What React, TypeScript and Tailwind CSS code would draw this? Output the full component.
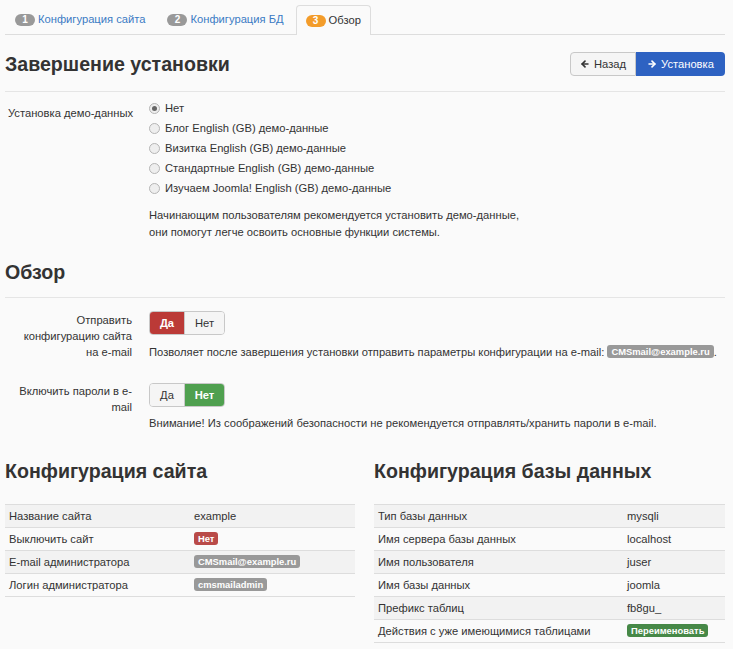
import { ArrowLeft, ArrowRight } from "lucide-react"

const demoOptions = [
  "Нет",
  "Блог English (GB) демо-данные",
  "Визитка English (GB) демо-данные",
  "Стандартные English (GB) демо-данные",
  "Изучаем Joomla! English (GB) демо-данные",
]

type Row = { label: string; value: React.ReactNode }

function Badge({ color, children }: { color: string; children: React.ReactNode }) {
  return (
    <span
      className={`inline-block rounded-[3px] px-[4px] text-[9.4px] leading-[13px] font-bold text-white align-[1px] ${color}`}
    >
      {children}
    </span>
  )
}

function TabBadge({ n, active }: { n: number; active?: boolean }) {
  return (
    <span
      className={`mr-[3px] inline-flex h-[12px] w-[20px] items-center justify-center rounded-full text-[10px] font-bold text-white ${
        active ? "bg-[#f39c2a]" : "bg-[#999999]"
      }`}
    >
      {n}
    </span>
  )
}

function ConfigTable({ rows, col }: { rows: Row[]; col: string }) {
  return (
    <div className="border-b border-[#dddddd]">
      {rows.map((row, i) => (
        <div
          key={i}
          className={`flex h-[23px] items-center border-t border-[#dddddd] ${i % 2 === 0 ? "bg-[#f2f2f2]" : ""}`}
        >
          <div className={`shrink-0 px-[4px] ${col}`}>{row.label}</div>
          <div className="px-[4px]">{row.value}</div>
        </div>
      ))}
    </div>
  )
}

function Toggle({ yes }: { yes: boolean }) {
  return (
    <div className="flex h-[24px] w-fit overflow-hidden rounded-[4px] border border-[#c8c8c8]">
      <div
        className={`flex w-[34px] items-center justify-center ${
          yes ? "bg-[#bb3a37] font-bold text-white" : "bg-[#f5f5f5] text-[#333]"
        }`}
      >
        Да
      </div>
      <div
        className={`flex w-[40px] items-center justify-center border-l border-[#c8c8c8] ${
          !yes ? "bg-[#4fa04f] font-bold text-white" : "bg-[#f5f5f5] text-[#333]"
        }`}
      >
        Нет
      </div>
    </div>
  )
}

export default function App() {
  const siteRows: Row[] = [
    { label: "Название сайта", value: "example" },
    { label: "Выключить сайт", value: <Badge color="bg-[#b94a48]">Нет</Badge> },
    { label: "E-mail администратора", value: <Badge color="bg-[#999999]">CMSmail@example.ru</Badge> },
    { label: "Логин администратора", value: <Badge color="bg-[#999999]">cmsmailadmin</Badge> },
  ]

  const dbRows: Row[] = [
    { label: "Тип базы данных", value: "mysqli" },
    { label: "Имя сервера базы данных", value: "localhost" },
    { label: "Имя пользователя", value: "juser" },
    { label: "Имя базы данных", value: "joomla" },
    { label: "Префикс таблиц", value: "fb8gu_" },
    {
      label: "Действия с уже имеющимися таблицами",
      value: <Badge color="bg-[#468847]">Переименовать</Badge>,
    },
  ]

  return (
    <div className="min-h-screen bg-[#fafafa] pl-[5px] pr-[8px] pt-[5px] font-['Liberation_Sans',Arial,sans-serif] text-[11.2px] text-[#333]">
      {/* tabs */}
      <div className="flex h-[30px] items-end border-b border-[#dddddd]">
        <div className="mr-[2px] flex h-[29px] items-center px-[10px] text-[#3a7bc4]">
          <TabBadge n={1} />
          Конфигурация сайта
        </div>
        <div className="mr-[2px] flex h-[29px] items-center px-[10px] text-[#3a7bc4]">
          <TabBadge n={2} />
          Конфигурация БД
        </div>
        <div className="-mb-px flex h-[30px] items-center rounded-t-[4px] border border-b-0 border-[#dddddd] bg-[#fafafa] px-[9px]">
          <TabBadge n={3} active />
          Обзор
        </div>
      </div>

      {/* finish */}
      <div className="flex items-center justify-between border-b border-[#e5e5e5] pt-[17px] pb-[15px]">
        <h2 className="text-[19.6px] font-bold leading-[24px]">Завершение установки</h2>
        <div className="flex h-[24px]">
          <div className="flex w-[66px] items-center justify-center gap-[4px] rounded-l-[4px] border border-[#c8c8c8] bg-[#f5f5f5]">
            <ArrowLeft size={10} strokeWidth={4} />
            Назад
          </div>
          <div className="flex w-[89px] items-center justify-center gap-[4px] rounded-r-[4px] bg-[#2e62c2] text-white">
            <ArrowRight size={10} strokeWidth={4} />
            Установка
          </div>
        </div>
      </div>

      <div className="flex pt-[6px]">
        <div className="w-[144px] shrink-0 pl-[3px] pt-[5px] leading-[20px]">Установка демо-данных</div>
        <div>
          {demoOptions.map((opt, i) => (
            <div key={i} className="flex h-[20px] items-center">
              <span className="mr-[5px] flex h-[11px] w-[11px] items-center justify-center rounded-full border border-[#b5b5b5] bg-[#eeeeee]">
                {i === 0 && <span className="h-[5px] w-[5px] rounded-full bg-[#666]" />}
              </span>
              {opt}
            </div>
          ))}
          <p className="mt-[9px] leading-[17px]">
            Начинающим пользователям рекомендуется установить демо-данные,
            <br />
            они помогут легче освоить основные функции системы.
          </p>
        </div>
      </div>

      <h2 className="mt-[19px] border-b border-[#e5e5e5] pb-[13px] text-[19.6px] font-bold leading-[24px]">Обзор</h2>

      <div className="flex pt-[13px]">
        <div className="w-[127px] shrink-0 pt-[1px] text-right leading-[16px]">
          Отправить
          <br />
          конфигурацию сайта
          <br />
          на e-mail
        </div>
        <div className="ml-[17px]">
          <Toggle yes />
          <div className="mt-[9px] leading-[16px]">
            Позволяет после завершения установки отправить параметры конфигурации на e-mail:{" "}
            <Badge color="bg-[#999999]">CMSmail@example.ru</Badge>.
          </div>
        </div>
      </div>

      <div className="flex pt-[23px]">
        <div className="w-[127px] shrink-0 text-right leading-[16px]">
          Включить пароли в e-
          <br />
          mail
        </div>
        <div className="ml-[17px]">
          <Toggle yes={false} />
          <div className="mt-[8px] leading-[16px]">
            Внимание! Из соображений безопасности не рекомендуется отправлять/хранить пароли в e-mail.
          </div>
        </div>
      </div>

      <div className="mt-[28px] flex gap-[19px]">
        <div className="w-[350px] shrink-0">
          <h2 className="pb-[21px] text-[19.6px] font-bold leading-[24px]">Конфигурация сайта</h2>
          <ConfigTable rows={siteRows} col="w-[185px]" />
        </div>
        <div className="flex-1">
          <h2 className="pb-[21px] text-[19.6px] font-bold leading-[24px]">Конфигурация базы данных</h2>
          <ConfigTable rows={dbRows} col="w-[249px]" />
        </div>
      </div>
    </div>
  )
}
